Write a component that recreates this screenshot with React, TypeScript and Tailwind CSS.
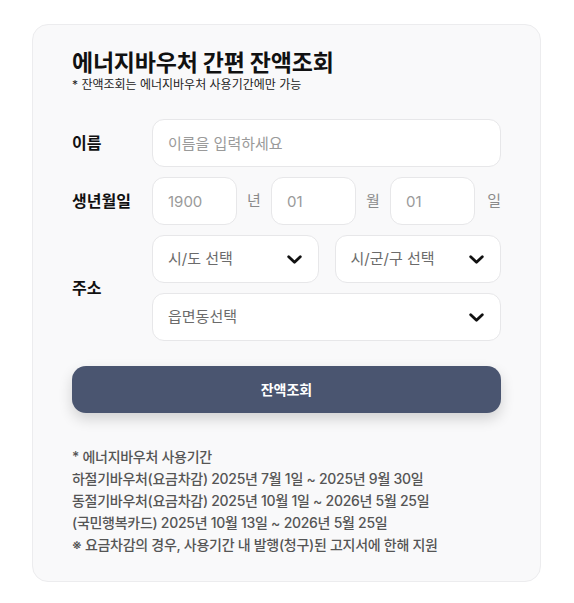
import React, { useState } from "react";

// Inter for latin + Noto CJK for hangul (close to Pretendard)
const font = { fontFamily: 'Inter, "Noto Sans CJK KR", "Noto Sans", sans-serif' };

const Chevron = () => (
  <svg width="15" height="9" viewBox="0 0 15 9" className="shrink-0">
    <polyline points="1.7,1.7 7.5,7.2 13.3,1.7" fill="none" stroke="#111" strokeWidth="2.8" strokeLinecap="round" strokeLinejoin="round" />
  </svg>
);

const SelectBox = ({ label, className = "" }: { label: string; className?: string }) => (
  <button className={`h-[48px] flex items-center justify-between pl-[15px] pr-[16px] bg-white border border-[#e7e7e9] rounded-xl text-[15px] text-[#6b6b6b] ${className}`}>
    <span>{label}</span>
    <Chevron />
  </button>
);

const App: React.FC = () => {
  const [name, setName] = useState("");

  return (
    <div className="min-h-[603px] bg-white pt-[24px] px-[32px]" style={font}>
      <div className="w-[509px] bg-[#f9f9fa] border border-[#ececee] rounded-2xl px-[39px] pt-[24px] pb-[25px]">
        <h1 className="text-[23px] font-bold text-[#111] leading-[28px] tracking-[-0.01em]">에너지바우처 간편 잔액조회</h1>
        <p className="text-[12px] text-[#222] leading-[16px]">* 잔액조회는 에너지바우처 사용기간에만 가능</p>

        <div className="mt-[26px] flex flex-col gap-[10px]">
          <div className="flex items-center">
            <div className="w-[80px] text-[16px] font-bold text-[#111]">이름</div>
            <input
              value={name}
              onChange={(e) => setName(e.target.value)}
              placeholder="이름을 입력하세요"
              className="flex-1 h-[48px] px-[15px] bg-white border border-[#e7e7e9] rounded-xl text-[15px] placeholder:text-[#9a9a9a] outline-none"
            />
          </div>

          <div className="flex items-center">
            <div className="w-[80px] text-[16px] font-bold text-[#111]">생년월일</div>
            <div className="flex-1 flex items-center text-[15px] text-[#8a8a8a]">
              <input placeholder="1900" className="w-[85px] h-[48px] px-[15px] bg-white border border-[#e7e7e9] rounded-xl placeholder:text-[#9a9a9a] outline-none" />
              <span className="w-[34px] text-center">년</span>
              <input placeholder="01" className="w-[85px] h-[48px] px-[15px] bg-white border border-[#e7e7e9] rounded-xl placeholder:text-[#9a9a9a] outline-none" />
              <span className="w-[34px] text-center">월</span>
              <input placeholder="01" className="w-[85px] h-[48px] px-[15px] bg-white border border-[#e7e7e9] rounded-xl placeholder:text-[#9a9a9a] outline-none" />
              <span className="flex-1 text-right">일</span>
            </div>
          </div>

          <div className="flex items-center">
            <div className="w-[80px] text-[16px] font-bold text-[#111]">주소</div>
            <div className="flex-1 flex flex-col gap-[10px]">
              <div className="flex gap-[16px]">
                <SelectBox label="시/도 선택" className="flex-1" />
                <SelectBox label="시/군/구 선택" className="flex-1" />
              </div>
              <SelectBox label="읍면동선택" className="w-full" />
            </div>
          </div>
        </div>

        <button className="mt-[25px] w-full h-[47px] rounded-[14px] bg-[#4a5570] text-white text-[14px] font-bold shadow-[0_6px_14px_rgba(0,0,0,0.16)]">
          잔액조회
        </button>

        <div className="mt-[33px] text-[14px] font-medium leading-[22px] text-[#555] tracking-[-0.02em]">
          <p>* 에너지바우처 사용기간</p>
          <p>하절기바우처(요금차감) 2025년 7월 1일 ~ 2025년 9월 30일</p>
          <p>동절기바우처(요금차감) 2025년 10월 1일 ~ 2026년 5월 25일</p>
          <p>(국민행복카드) 2025년 10월 13일 ~ 2026년 5월 25일</p>
          <p>※ 요금차감의 경우, 사용기간 내 발행(청구)된 고지서에 한해 지원</p>
        </div>
      </div>
    </div>
  );
};

export default App;
